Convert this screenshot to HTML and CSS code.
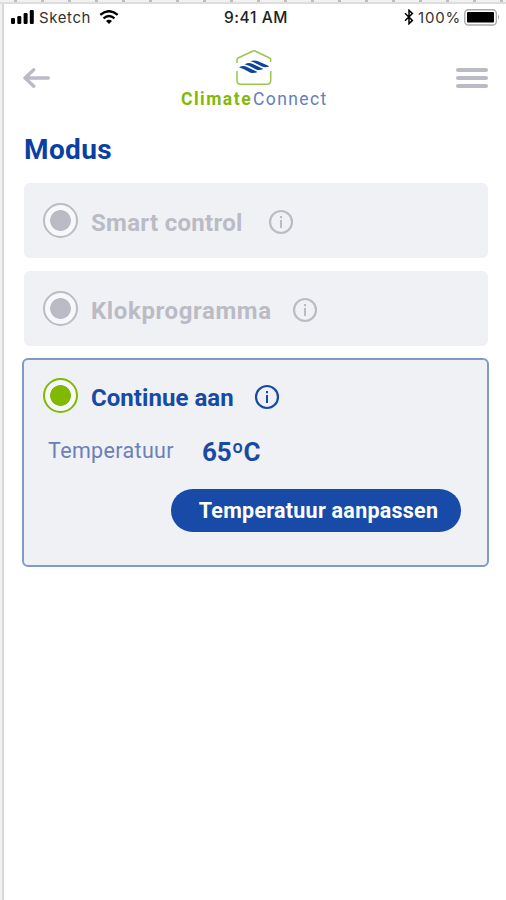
FILE: index.html
```html
<!DOCTYPE html>
<html lang="nl">
<head>
<meta charset="utf-8">
<title>ClimateConnect</title>
<link rel="stylesheet" href="styles.css">
</head>
<body>
<div class="ruler"></div>
<div class="screen">
  <div class="status">
    <div class="status-side">
      <svg class="signal" width="23" height="14" viewBox="0 0 23 14"><rect x="0" y="8" width="4" height="6" rx="1.2"/><rect x="6.3" y="6" width="4" height="8" rx="1.2"/><rect x="12.6" y="3" width="4" height="11" rx="1.2"/><rect x="18.8" y="0" width="4" height="14" rx="1.2"/></svg>
      <span class="carrier">Sketch</span>
      <svg class="wifi" width="18" height="13" viewBox="0 0 18 13"><g fill="none" stroke="#000" stroke-width="2.2"><path d="M.9 4.5Q9-2.3 17.1 4.5"/><path d="M3.9 7.7Q9 3.3 14.1 7.7"/></g><path d="M9 13 6.2 10.1Q9 7.9 11.8 10.1Z"/></svg>
    </div>
    <span class="time">9:41 AM</span>
    <div class="status-side status-end">
      <svg class="bluetooth" width="10" height="16" viewBox="0 0 10 16"><path d="M1 4.2 8.4 11.4 5 14.7V1.3L8.4 4.6 1 11.8" fill="none" stroke="#000" stroke-width="1.5"/></svg>
      <span class="charge">100%</span>
      <svg class="battery" width="37" height="17" viewBox="0 0 37 17"><rect x=".8" y=".8" width="31.5" height="15.2" rx="3.6" fill="#fff" stroke="#aaa" stroke-width="1.4"/><rect x="3" y="3" width="27" height="10.6" rx="1"/><path d="M34 5.5Q36.3 8 34 10.8Z" fill="#aaa"/></svg>
    </div>
  </div>

  <header class="header">
    <svg class="back" width="28" height="20" viewBox="0 0 28 20"><path d="M10.8 1.8 2 10l8.8 8.2M3 10h22.3" fill="none" stroke="#bbbbc8" stroke-width="3.4" stroke-linecap="round" stroke-linejoin="round"/></svg>
    <div class="brand">
      <svg class="logo" width="36" height="36" viewBox="0 0 36 36">
        <path d="M1 13V9.8Q1 8.6 2 8L16.5 1.2Q18 .5 19.5 1.2L33.5 8Q34.7 8.6 34.7 9.8V12M1 21v9.5Q1 34.3 4.8 34.3H30.9Q34.7 34.3 34.7 30.5V21" fill="none" stroke="#9bc54d" stroke-width="1.5"/>
        <g fill="#0d43a0"><path d="M14.5 11.2Q18.5 9.9 22 11.3L33.5 16.2Q29.5 18 26 16.6L19.5 13.2Q17 11.8 14.5 11.2Z"/><path d="M8.8 14.2Q12.8 12.3 16.3 13.7L27.3 18.9Q23.3 20.8 20 19.4L13.5 16.1Q11.5 15 8.8 14.2Z"/><path d="M3 17.2Q7 15.3 10.5 16.7L21.5 22Q17.5 23.9 14 22.5L7.5 19.1Q5.5 18 3 17.2Z"/></g>
      </svg>
      <div class="wordmark"><b>Climate</b><span>Connect</span></div>
    </div>
    <div class="menu"><i></i><i></i><i></i></div>
  </header>

  <main class="content">
    <h1 class="title">Modus</h1>
    <section class="card">
      <div class="option">
        <span class="radio"></span><span class="label label-smart">Smart control</span>
        <svg class="info" width="26" height="26" viewBox="0 0 26 26"><circle cx="13" cy="13" r="11" fill="none" stroke="currentColor" stroke-width="2.2"/><path d="M13 11v8M13 7v2.2" stroke="currentColor" stroke-width="2"/></svg>
      </div>
    </section>
    <section class="card">
      <div class="option">
        <span class="radio"></span><span class="label label-clock">Klokprogramma</span>
        <svg class="info" width="26" height="26" viewBox="0 0 26 26"><circle cx="13" cy="13" r="11" fill="none" stroke="currentColor" stroke-width="2.2"/><path d="M13 11v8M13 7v2.2" stroke="currentColor" stroke-width="2"/></svg>
      </div>
    </section>
    <section class="card card-active">
      <div class="option">
        <span class="radio"></span><span class="label label-on">Continue aan</span>
        <svg class="info" width="26" height="26" viewBox="0 0 26 26"><circle cx="13" cy="13" r="11" fill="none" stroke="currentColor" stroke-width="2.2"/><path d="M13 11v8M13 7v2.2" stroke="currentColor" stroke-width="2"/></svg>
      </div>
      <div class="reading"><span class="reading-name">Temperatuur</span><span class="reading-value">65ºC</span></div>
      <button class="adjust">Temperatuur aanpassen</button>
    </section>
  </main>
</div>
</body>
</html>
```
FILE: styles.css
```css
* { box-sizing: border-box; }
body { margin: 0; height: 900px; overflow: hidden; background: #fff; font-family: Roboto, "Liberation Sans", sans-serif; }
svg { display: block; flex: none; }
.ruler {
  height: 4px;
  border-bottom: 2px solid #dedede;
  background: repeating-linear-gradient(90deg, #bdbdbd 0 3px, #f1f1f1 3px 27px) 14px 0;
}
.screen { height: 896px; padding-left: 4px; background: linear-gradient(90deg, #f1f1f1 0 2px, #d8d8d8 2px 4px, #fff 4px); }

.status { display: grid; grid-template-columns: 1fr auto 1fr; height: 28px; padding: 0 5px 0 7px; align-items: center; font-family: Inter, "Liberation Sans", sans-serif; font-size: 15px; color: #333; }
.status-side { display: flex; align-items: center; margin-top: -2px; }
.status-end { justify-content: flex-end; }
.carrier { margin-left: 5px; width: 53px; white-space: nowrap; letter-spacing: .6px; }
.wifi { margin-left: 7px; width: 20px; height: 14px; }
.time { margin: -2px 0 0 0; font-weight: 500; font-size: 15.5px; letter-spacing: .6px; color: #222; }
.bluetooth { margin-right: 4px; }
.charge { width: 43px; margin-right: 3px; white-space: nowrap; letter-spacing: .8px; }

.header { display: flex; justify-content: space-between; height: 94px; padding: 17px 18px 0 19px; }
.back { margin-top: 19px; }
.brand { display: flex; flex-direction: column; align-items: center; width: 148px; margin-left: 3px; }
.logo { margin-top: 1px; margin-left: -2px; }
.wordmark { display: flex; margin-top: 3px; font-size: 17.5px; line-height: 21px; letter-spacing: 1.4px; color: #6380bd; }
.wordmark b { width: 72px; color: #80b90a; letter-spacing: 1.5px; }
.wordmark span { width: 76px; }
.menu { display: flex; flex-direction: column; gap: 4px; width: 32px; margin-top: 19px; }
.menu i { height: 4px; border-radius: 2px; background: #bbbbc8; }

.content { padding: 0 17px 0 19px; }
.title { margin: 0 0 17px 1px; height: 40px; font-size: 28px; line-height: 47px; letter-spacing: .4px; color: #0b3fa3; }
.card { height: 75px; margin: 0 1px 13px; padding: 20px 19px; border-radius: 6px; background: #f0f1f5; color: #bbbbc5; }
.option { display: flex; align-items: center; height: 35px; }
.radio { flex: none; width: 35px; height: 35px; border: 2.5px solid currentColor; border-radius: 50%; background: radial-gradient(circle, currentColor 0 10px, #f8f8fb 10.8px); }
.label { margin: 4px 24px 0 13px; font-size: 24px; font-weight: 700; line-height: 32px; white-space: nowrap; }
.label-smart { width: 153px; letter-spacing: .3px; }
.label-clock { width: 177px; letter-spacing: .6px; }
.label-on { width: 139px; letter-spacing: .05px; color: #174aa5; }
.info { margin-top: 2px; }
.card-active { height: 209px; margin: -1px 0 0 -1px; padding: 18px 26px 0 19px; border: 2px solid #7f9bcd; color: #80b900; }
.card-active .info { color: #174aa5; }
.reading { display: flex; align-items: center; height: 40px; margin: 18px 0 0 5px; }
.reading-name { width: 154px; margin-top: -2px; font-size: 21.5px; font-weight: 400; letter-spacing: .35px; color: #6b80b9; }
.reading-value { font-size: 26px; font-weight: 700; letter-spacing: -.1px; color: #174aa5; margin-top: 1px; }
.adjust { display: block; width: 290px; height: 43px; margin: 18px 0 0 auto; padding: 0 0 0 5px; border: 0; border-radius: 22px; background: #184ba7; color: #fff; font: 700 21.5px/42px Roboto, sans-serif; letter-spacing: .25px; white-space: nowrap; }
```
